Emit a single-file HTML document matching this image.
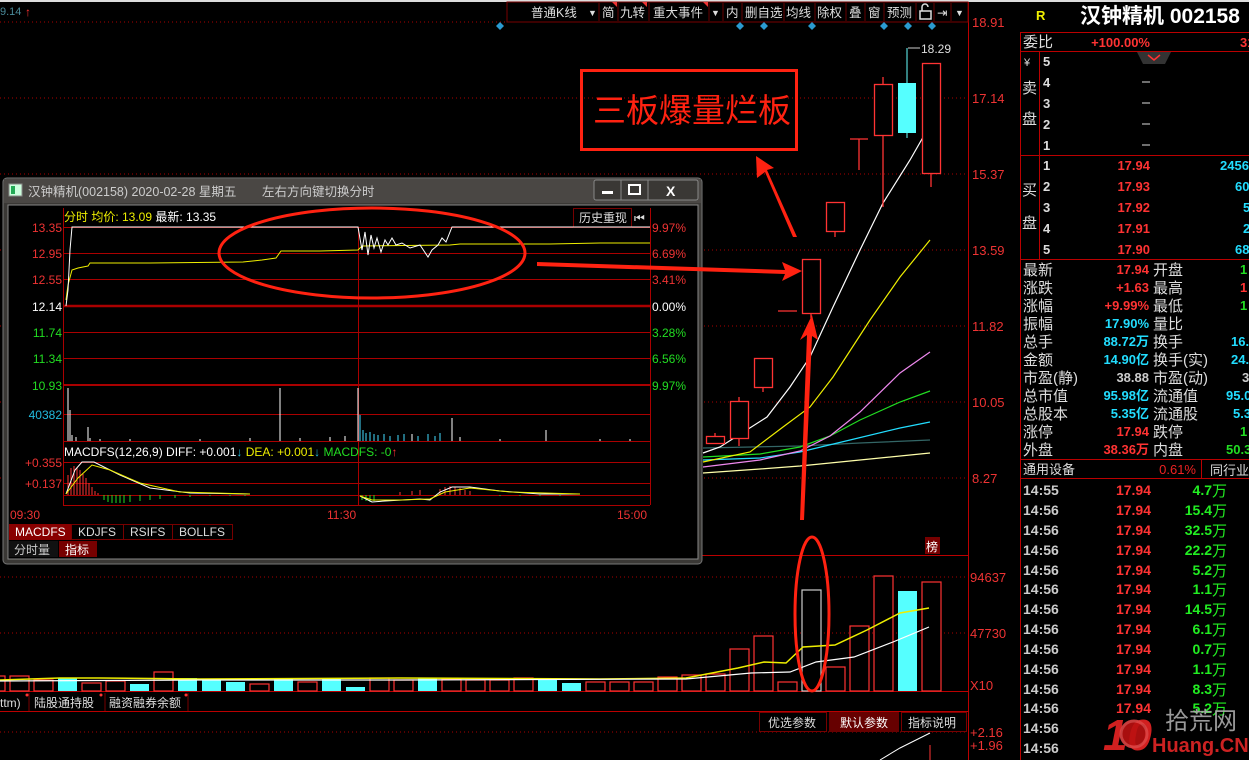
<!DOCTYPE html>
<html><head><meta charset="utf-8"><style>
html,body{margin:0;padding:0;background:#000;overflow:hidden;width:1249px;height:760px}
svg{display:block;font-family:"Liberation Sans","Noto Sans CJK SC",sans-serif}
</style></head><body>
<svg width="1249" height="760" viewBox="0 0 1249 760" xmlns="http://www.w3.org/2000/svg">
<rect width="1249" height="760" fill="#000"/>
<rect x="0" y="0" width="1249" height="2" fill="#ddd"/>
<g stroke="#a00" stroke-dasharray="1,3" stroke-width="1">
<line x1="0" y1="22" x2="968" y2="22"/><line x1="0" y1="98" x2="968" y2="98"/><line x1="0" y1="174" x2="968" y2="174"/>
<line x1="0" y1="250" x2="968" y2="250"/><line x1="0" y1="326" x2="968" y2="326"/><line x1="0" y1="402" x2="968" y2="402"/>
<line x1="0" y1="478" x2="968" y2="478"/><line x1="0" y1="577" x2="968" y2="577"/><line x1="0" y1="633" x2="968" y2="633"/>
<line x1="0" y1="732" x2="968" y2="732"/>
</g>
<line x1="968.5" y1="2" x2="968.5" y2="760" stroke="#b00"/>
<line x1="700" y1="555.5" x2="968" y2="555.5" stroke="#b00"/>
<line x1="0" y1="691.5" x2="968" y2="691.5" stroke="#b00"/>
<line x1="0" y1="711.5" x2="968" y2="711.5" stroke="#b00"/>
<g fill="#e33" font-size="13">
<text x="972" y="27">18.91</text><text x="972" y="103">17.14</text><text x="972" y="179">15.37</text>
<text x="972" y="255">13.59</text><text x="972" y="331">11.82</text><text x="972" y="407">10.05</text><text x="972" y="483">8.27</text>
<text x="970" y="582">94637</text><text x="970" y="638">47730</text><text x="970" y="690">X10</text>
<text x="970" y="737">+2.16</text><text x="970" y="750">+1.96</text>
</g>
<text x="0" y="15" fill="#4a8a99" font-size="11">9.14</text>
<text x="25" y="16" fill="#f33" font-size="12" font-weight="bold">↑</text>
<rect x="507" y="2" width="461" height="20" fill="#000" stroke="#700"/>
<g fill="#ddd" font-size="12.5">
<text x="531" y="17">普通K线</text><text x="588" y="16" font-size="9">▼</text>
<text x="602" y="17">简</text><text x="620" y="17">九转</text><text x="653" y="17">重大事件</text><text x="711" y="16" font-size="9">▼</text>
<text x="726" y="17">内</text><text x="745" y="17">删自选</text><text x="786" y="17">均线</text><text x="817" y="17">除权</text>
<text x="849" y="17">叠</text><text x="868" y="17">窗</text><text x="887" y="17">预测</text><text x="937" y="17">⇥</text><text x="955" y="16" font-size="9">▼</text>
</g>
<rect x="920" y="11" width="11" height="8" fill="none" stroke="#ddd" stroke-width="1.5"/><path d="M922 11V7a3 3 0 0 1 6 0" fill="none" stroke="#ddd" stroke-width="1.5"/>
<g stroke="#600"><line x1="599" y1="3" x2="599" y2="21"/><line x1="618" y1="3" x2="618" y2="21"/><line x1="649" y1="3" x2="649" y2="21"/><line x1="709" y1="3" x2="709" y2="21"/><line x1="723" y1="3" x2="723" y2="21"/><line x1="742" y1="3" x2="742" y2="21"/><line x1="784" y1="3" x2="784" y2="21"/><line x1="815" y1="3" x2="815" y2="21"/><line x1="846" y1="3" x2="846" y2="21"/><line x1="865" y1="3" x2="865" y2="21"/><line x1="884" y1="3" x2="884" y2="21"/><line x1="916" y1="3" x2="916" y2="21"/><line x1="934" y1="3" x2="934" y2="21"/><line x1="951" y1="3" x2="951" y2="21"/></g>
<g fill="#e33"><path d="M612 2h5v5z"/><path d="M642 2h5v5z"/><path d="M703 2h5v5z"/></g>
<g fill="#2a9ad0">
<path d="M500 22l4 4-4 4-4-4z"/><path d="M740 22l4 4-4 4-4-4z"/><path d="M764 22l4 4-4 4-4-4z"/><path d="M812 22l4 4-4 4-4-4z"/><path d="M884 22l4 4-4 4-4-4z"/><path d="M908 22l4 4-4 4-4-4z"/><path d="M932 22l4 4-4 4-4-4z"/>
</g>
<g fill="none" stroke-width="1.2">
<polyline stroke="#ffa" points="703,473 760,469 800,466 860,460 930,453"/>
<polyline stroke="#366" points="703,448 800,446 860,443 930,440"/>
<polyline stroke="#2df" points="703,460 760,458 800,452 850,440 900,428 930,422"/>
<polyline stroke="#2d2" points="703,457 760,454 800,447 830,436 860,420 900,402 930,391"/>
<polyline stroke="#e8e" points="703,467 760,460 800,451 830,436 860,412 900,373 930,352"/>
<polyline stroke="#ee0" points="703,462 750,452 783,427 810,407 833,377 870,320 900,277 930,240"/>
<polyline stroke="#fff" points="703,453 720,447 767,417 790,387 810,357 833,307 860,250 883,203 910,160 930,125"/>
</g>
<g fill="none" stroke="#f33" stroke-width="1.3">
<rect x="706.5" y="436.5" width="18" height="7"/><line x1="715" y1="433" x2="715" y2="436"/>
<line x1="739" y1="397" x2="739" y2="446"/><rect x="730.5" y="401.5" width="18" height="37" fill="#000"/>
<line x1="763" y1="387" x2="763" y2="392"/><rect x="754.5" y="358.5" width="18" height="29" fill="#000"/>
<line x1="778" y1="311" x2="797" y2="311"/>
<line x1="811" y1="313" x2="811" y2="318"/><rect x="802.5" y="259.5" width="18" height="54" fill="#000"/>
<line x1="835" y1="231" x2="835" y2="237"/><rect x="826.5" y="202.5" width="18" height="29" fill="#000"/>
<line x1="850" y1="139" x2="868" y2="139"/><line x1="859" y1="139" x2="859" y2="170"/>
<line x1="883" y1="77" x2="883" y2="207"/><rect x="874.5" y="84.5" width="18" height="51" fill="#000"/>
<line x1="931" y1="173" x2="931" y2="187"/><rect x="922.5" y="63.5" width="18" height="110" fill="#000"/>
</g>
<line x1="907" y1="48" x2="907" y2="138" stroke="#6ff"/>
<rect x="898" y="83" width="18" height="50" fill="#5ff"/>
<line x1="908" y1="48" x2="920" y2="48" stroke="#ccc"/>
<text x="921" y="53" fill="#ddd" font-size="12">18.29</text>
<g stroke="#f33" stroke-width="1.2" fill="#000">
<rect x="-14" y="676" width="19" height="15"/>
<rect x="10" y="676" width="19" height="15"/><rect x="34" y="680" width="19" height="11"/><rect x="82" y="683" width="19" height="8"/><rect x="106" y="681" width="19" height="10"/><rect x="154" y="672" width="19" height="19"/><rect x="250" y="684" width="19" height="7"/><rect x="298" y="682" width="19" height="9"/><rect x="370" y="678" width="19" height="13"/><rect x="394" y="680" width="19" height="11"/><rect x="442" y="679" width="19" height="12"/><rect x="466" y="680" width="19" height="11"/><rect x="490" y="680" width="19" height="11"/><rect x="514" y="678" width="19" height="13"/><rect x="586" y="682" width="19" height="9"/><rect x="610" y="682" width="19" height="9"/><rect x="634" y="682" width="19" height="9"/><rect x="658" y="677" width="19" height="14"/><rect x="682" y="675" width="19" height="16"/><rect x="706" y="674" width="19" height="17"/><rect x="730" y="649" width="19" height="42"/><rect x="754" y="636" width="19" height="55"/><rect x="778" y="682" width="19" height="9"/><rect x="826" y="667" width="19" height="24"/><rect x="850" y="626" width="19" height="65"/><rect x="874" y="576" width="19" height="115"/><rect x="922" y="582" width="19" height="109"/>
<rect x="802" y="590" width="19" height="101" stroke="#ccc"/>
</g>
<g fill="#5ff">
<rect x="58" y="678" width="19" height="13"/><rect x="130" y="684" width="19" height="7"/><rect x="178" y="678" width="19" height="13"/><rect x="202" y="680" width="19" height="11"/><rect x="226" y="682" width="19" height="9"/><rect x="274" y="679" width="19" height="12"/><rect x="322" y="679" width="19" height="12"/><rect x="346" y="687" width="19" height="4"/><rect x="418" y="678" width="19" height="13"/><rect x="538" y="680" width="19" height="11"/><rect x="562" y="683" width="19" height="8"/><rect x="898" y="591" width="19" height="100"/>
</g>
<polyline fill="none" stroke="#ee0" stroke-width="1.5" points="0,680 60,678 100,678 200,679 400,678 600,679 686,678 738,668 764,662 786,663 803,647 835,645 867,630 900,613 929,608"/>
<polyline fill="none" stroke="#fff" stroke-width="1.2" points="0,681 200,680 400,680 686,679 751,673 790,672 816,662 854,657 893,642 929,627"/>
<rect x="925" y="537" width="15" height="17" fill="#700"/><text x="926" y="551" fill="#fff" font-size="12">榜</text>
<g font-size="12" fill="#ddd"><text x="0" y="707">ttm)</text><text x="34" y="707">陆股通持股</text><text x="109" y="707">融资融券余额</text></g>
<g stroke="#700"><line x1="29" y1="693" x2="29" y2="711"/><line x1="105" y1="693" x2="105" y2="711"/><line x1="188" y1="693" x2="188" y2="711"/></g>
<g fill="#f33"><circle cx="27" cy="695" r="1.5"/><circle cx="101" cy="695" r="1.5"/><circle cx="186" cy="695" r="1.5"/></g>
<rect x="759.5" y="712.5" width="67" height="19" fill="#000" stroke="#700"/><text x="768" y="727" fill="#ddd" font-size="12">优选参数</text>
<rect x="829" y="712" width="70" height="20" fill="#600"/><text x="840" y="727" fill="#fff" font-size="12">默认参数</text>
<rect x="901.5" y="712.5" width="65" height="19" fill="#000" stroke="#700"/><text x="908" y="727" fill="#ddd" font-size="12">指标说明</text>
<polyline fill="none" stroke="#fff" points="880,760 900,748 930,733"/>
<line x1="930" y1="745" x2="930" y2="760" stroke="#f33"/>

<rect x="3" y="178" width="699" height="386" rx="4" fill="#3a3835" stroke="#777"/>
<rect x="4" y="179" width="697" height="24" fill="#4a4744"/>
<rect x="9" y="184" width="13" height="12" fill="#cfd" stroke="#888"/><rect x="11" y="186" width="4" height="8" fill="#2a5"/>
<text x="28" y="196" fill="#ccc" font-size="12.5">汉钟精机(002158) 2020-02-28 星期五</text>
<text x="262" y="196" fill="#ccc" font-size="12.5">左右方向键切换分时</text>
<rect x="594" y="180" width="104" height="20" fill="#3a3835" stroke="#888" rx="2"/>
<line x1="621" y1="180" x2="621" y2="200" stroke="#888"/><line x1="648" y1="180" x2="648" y2="200" stroke="#888"/>
<rect x="602" y="191" width="11" height="3" fill="#fff"/>
<rect x="629" y="185" width="11" height="9" fill="none" stroke="#fff" stroke-width="2"/>
<text x="666" y="196" fill="#fff" font-size="14" font-weight="bold">X</text>
<rect x="8" y="205" width="690" height="354" fill="#000" stroke="#888"/>
<g stroke="#a00">
<line x1="63" y1="227.5" x2="650" y2="227.5"/><line x1="63" y1="253.5" x2="650" y2="253.5"/><line x1="63" y1="279.5" x2="650" y2="279.5"/>
<line x1="63" y1="306" x2="650" y2="306" stroke-width="2.5"/><line x1="63" y1="332.5" x2="650" y2="332.5"/><line x1="63" y1="358.5" x2="650" y2="358.5"/>
<line x1="63" y1="385" x2="650" y2="385" stroke-width="2"/><line x1="63" y1="414.5" x2="650" y2="414.5"/><line x1="63" y1="441.5" x2="650" y2="441.5"/>
<line x1="63" y1="462.5" x2="650" y2="462.5"/><line x1="63" y1="483.5" x2="650" y2="483.5"/><line x1="63" y1="495.5" x2="650" y2="495.5"/><line x1="63" y1="505.5" x2="650" y2="505.5"/>
<line x1="63.5" y1="208" x2="63.5" y2="505"/><line x1="358.5" y1="227" x2="358.5" y2="505"/><line x1="650.5" y1="208" x2="650.5" y2="505"/>
</g>
<g font-size="12" text-anchor="end">
<text x="62" y="232" fill="#e33">13.35</text><text x="62" y="258" fill="#e33">12.95</text><text x="62" y="284" fill="#e33">12.55</text>
<text x="62" y="311" fill="#fff">12.14</text><text x="62" y="337" fill="#2d2">11.74</text><text x="62" y="363" fill="#2d2">11.34</text><text x="62" y="390" fill="#2d2">10.93</text>
<text x="62" y="419" fill="#2bd">40382</text><text x="62" y="467" fill="#e33">+0.355</text><text x="62" y="488" fill="#e33">+0.137</text>
</g>
<g font-size="12">
<text x="652" y="232" fill="#e33">9.97%</text><text x="652" y="258" fill="#e33">6.69%</text><text x="652" y="284" fill="#e33">3.41%</text>
<text x="652" y="311" fill="#fff">0.00%</text><text x="652" y="337" fill="#2d2">3.28%</text><text x="652" y="363" fill="#2d2">6.56%</text><text x="652" y="390" fill="#2d2">9.97%</text>
<text x="10" y="519" fill="#e33">09:30</text><text x="327" y="519" fill="#e33">11:30</text><text x="617" y="519" fill="#e33">15:00</text>
</g>
<text x="64" y="221" font-size="12"><tspan fill="#ee0">分时 均价: 13.09 </tspan><tspan fill="#fff">最新: 13.35</tspan></text>
<rect x="573.5" y="208.5" width="58" height="19" fill="#000" stroke="#700"/><text x="579" y="222" fill="#ddd" font-size="12">历史重现</text>
<text x="634" y="222" fill="#ddd" font-size="12">⏮</text>
<polyline fill="none" stroke="#ee0" points="66,300 68,285 72,270 78,268 88,266 90,263 150,263 243,262 262,260 276,258 281,251 320,251 358,250 362,246 450,245 460,244 550,244 600,243 650,243"/>
<polyline fill="none" stroke="#fff" points="66,306 68,290 70,250 72,227 358,227 362,250 365,232 368,255 371,235 374,248 377,238 381,252 385,240 388,245 392,238 396,245 402,243 410,248 420,245 428,257 432,250 438,245 442,238 446,242 452,227 650,227"/>
<g stroke="#fff"><line x1="68" y1="441" x2="68" y2="388"/><line x1="70" y1="441" x2="70" y2="410"/><line x1="88" y1="441" x2="88" y2="427"/><line x1="280" y1="441" x2="280" y2="388"/><line x1="358" y1="441" x2="358" y2="388"/><line x1="452" y1="441" x2="452" y2="418"/><line x1="546" y1="441" x2="546" y2="430"/><line x1="412" y1="441" x2="412" y2="434"/></g>
<path d="M72 441V435M76 441V437M90 441V438M100 441V439M130 441V439M200 441V439M250 441V438M300 441V438M330 441V437M345 441V436M460 441V437M500 441V439M600 441V439M630 441V439" stroke="#fff"/>
<path d="M360 441V415M363 441V430M366 441V433M370 441V432M374 441V434M378 441V435M384 441V434M390 441V436M398 441V435M404 441V434M418 441V436M428 441V434M435 441V436M440 441V433" stroke="#4df"/>
<text x="64" y="456" font-size="12"><tspan fill="#fff">MACDFS(12,26,9) DIFF: +0.001</tspan><tspan fill="#2bd">↓</tspan><tspan fill="#ee0">  DEA: +0.001</tspan><tspan fill="#2bd">↓</tspan><tspan fill="#2d2">  MACDFS: -0</tspan><tspan fill="#f33">↑</tspan></text>
<path d="M68 495V475M71 495V468M74 495V466M77 495V468M80 495V470M83 495V474M86 495V478M89 495V483M92 495V487M95 495V491M98 495V493" stroke="#f33"/>
<path d="M104 495V500M108 495V502M112 495V503M116 495V503M120 495V503M124 495V503M130 495V502M140 495V501M150 495V500M160 495V499M175 495V498M190 495V497M210 495V496M230 495V496M245 495V496" stroke="#2d2"/>
<path d="M400 495V492M412 495V491M420 495V490M440 495V489M445 495V487M450 495V486M455 495V487M460 495V488M465 495V490M470 495V491" stroke="#f33"/>
<path d="M362 495V500M366 495V501M370 495V502M374 495V501M500 495V496M520 495V496M540 495V496M560 495V496" stroke="#2d2"/>
<polyline fill="none" stroke="#fff" points="66,494 75,470 82,462 94,462 120,475 150,488 190,493 250,494"/>
<polyline fill="none" stroke="#ee0" points="66,494 78,478 92,465 110,470 140,483 180,492 250,494"/>
<polyline fill="none" stroke="#fff" points="360,496 372,502 385,501 420,499 430,500 440,492 452,487 470,487 500,491 540,494 580,494"/>
<polyline fill="none" stroke="#ee0" points="360,496 372,500 400,500 430,499 445,492 470,488 510,492 580,494"/>
<rect x="9" y="524" width="62" height="16" fill="#800"/><text x="15" y="536" fill="#fff" font-size="12">MACDFS</text>
<rect x="71.5" y="524.5" width="52" height="15" fill="none" stroke="#700"/><text x="78" y="536" fill="#ddd" font-size="12">KDJFS</text>
<rect x="123.5" y="524.5" width="49" height="15" fill="none" stroke="#700"/><text x="130" y="536" fill="#ddd" font-size="12">RSIFS</text>
<rect x="172.5" y="524.5" width="60" height="15" fill="none" stroke="#700"/><text x="179" y="536" fill="#ddd" font-size="12">BOLLFS</text>
<rect x="9" y="541" width="49" height="16" fill="#111"/><text x="14" y="554" fill="#ccc" font-size="12">分时量</text>
<rect x="59" y="541" width="38" height="16" fill="#700"/><text x="65" y="554" fill="#fff" font-size="12">指标</text>

<ellipse cx="372" cy="253" rx="153" ry="45" fill="none" stroke="#f21" stroke-width="3"/>
<path d="M537 262L785 270L782 262L802 271L782 281L785 274L537 266Z" fill="#f21"/>
<rect x="581.5" y="70.5" width="215" height="79" fill="none" stroke="#f21" stroke-width="3"/>
<text x="593" y="122" fill="#f21" font-size="33">三板爆量烂板</text>
<path d="M797 237L793 237L765 172L757 178L756 156L774 168L767 170Z" fill="#f21"/>
<ellipse cx="812" cy="614" rx="17" ry="77" fill="none" stroke="#f21" stroke-width="3"/>
<path d="M800 520L807 335L800 340L812 315L818 340L812 336L804 520Z" fill="#f21"/>

<line x1="1020.5" y1="32" x2="1020.5" y2="760" stroke="#b00"/>
<text x="1036" y="20" fill="#ee0" font-size="13" font-weight="bold">R</text>
<text x="1080" y="23" fill="#fff" font-size="21" font-weight="bold">汉钟精机 002158</text>
<g stroke="#b00">
<line x1="1020" y1="32.5" x2="1249" y2="32.5"/><line x1="1020" y1="51.5" x2="1249" y2="51.5"/><line x1="1020" y1="155.5" x2="1249" y2="155.5"/>
<line x1="1020" y1="259.5" x2="1249" y2="259.5"/><line x1="1020" y1="459.5" x2="1249" y2="459.5"/><line x1="1020" y1="478.5" x2="1249" y2="478.5"/>
<line x1="1039.5" y1="52" x2="1039.5" y2="259"/><line x1="1201.5" y1="460" x2="1201.5" y2="478"/>
</g>
<path d="M1137 52h34l-6 12h-22z" fill="#333"/><path d="M1148 55l6 5 6-5" fill="none" stroke="#f33" stroke-width="1.5"/>
<g font-size="15" fill="#ddd">
<text x="1023" y="47">委比</text>
<text x="1024" y="66" font-size="11">¥</text>
<text x="1022" y="93">卖</text><text x="1022" y="124">盘</text>
<text x="1022" y="195">买</text><text x="1022" y="228">盘</text>
</g>
<text x="1150" y="47" fill="#f33" font-size="13" font-weight="bold" text-anchor="end">+100.00%</text>
<text x="1240" y="47" fill="#f33" font-size="13" font-weight="bold">31</text>
<g font-size="13" font-weight="bold" fill="#ddd">
<text x="1043" y="66">5</text><text x="1043" y="87">4</text><text x="1043" y="108">3</text><text x="1043" y="129">2</text><text x="1043" y="150">1</text>
<text x="1043" y="170">1</text><text x="1043" y="191">2</text><text x="1043" y="212">3</text><text x="1043" y="233">4</text><text x="1043" y="254">5</text>
</g>
<g stroke="#ddd"><line x1="1142" y1="82" x2="1150" y2="82"/><line x1="1142" y1="103" x2="1150" y2="103"/><line x1="1142" y1="124" x2="1150" y2="124"/><line x1="1142" y1="145" x2="1150" y2="145"/></g>
<g font-size="13" font-weight="bold" fill="#f33" text-anchor="end">
<text x="1150" y="170">17.94</text><text x="1150" y="191">17.93</text><text x="1150" y="212">17.92</text><text x="1150" y="233">17.91</text><text x="1150" y="254">17.90</text>
</g>
<g font-size="13" font-weight="bold" fill="#2df">
<text x="1220" y="170">2456</text><text x="1235" y="191">60</text><text x="1243" y="212">5</text><text x="1243" y="233">2</text><text x="1235" y="254">68</text>
</g>
<g font-size="15" fill="#ddd">
<text x="1023" y="275">最新</text><text x="1023" y="293">涨跌</text><text x="1023" y="311">涨幅</text><text x="1023" y="329">振幅</text><text x="1023" y="347">总手</text><text x="1023" y="365">金额</text><text x="1023" y="383">市盈(静)</text><text x="1023" y="401">总市值</text><text x="1023" y="419">总股本</text><text x="1023" y="437">涨停</text><text x="1023" y="455">外盘</text>
<text x="1153" y="275">开盘</text><text x="1153" y="293">最高</text><text x="1153" y="311">最低</text><text x="1153" y="329">量比</text><text x="1153" y="347">换手</text><text x="1153" y="365">换手(实)</text><text x="1153" y="383">市盈(动)</text><text x="1153" y="401">流通值</text><text x="1153" y="419">流通股</text><text x="1153" y="437">跌停</text><text x="1153" y="455">内盘</text>
</g>
<g font-size="13" font-weight="bold" text-anchor="end">
<text x="1149" y="274" fill="#f33">17.94</text><text x="1149" y="292" fill="#f33">+1.63</text><text x="1149" y="310" fill="#f33">+9.99%</text><text x="1149" y="328" fill="#2df">17.90%</text>
<text x="1149" y="346" fill="#2df">88.72万</text><text x="1149" y="364" fill="#2df">14.90亿</text><text x="1149" y="382" fill="#ccc">38.88</text><text x="1149" y="400" fill="#2df">95.98亿</text>
<text x="1149" y="418" fill="#2df">5.35亿</text><text x="1149" y="436" fill="#f33">17.94</text><text x="1149" y="454" fill="#f33">38.36万</text>
</g>
<g font-size="13" font-weight="bold">
<text x="1240" y="274" fill="#2d2">1</text><text x="1240" y="292" fill="#f33">1</text><text x="1240" y="310" fill="#2d2">1</text>
<text x="1231" y="346" fill="#2df">16.</text><text x="1231" y="364" fill="#2df">24.</text><text x="1242" y="382" fill="#ccc">3</text><text x="1226" y="400" fill="#2df">95.0</text>
<text x="1233" y="418" fill="#2df">5.3</text><text x="1240" y="436" fill="#2d2">1</text><text x="1226" y="454" fill="#2d2">50.3</text>
</g>
<text x="1023" y="474" fill="#ddd" font-size="13">通用设备</text>
<text x="1196" y="474" fill="#e22" font-size="13" text-anchor="end">0.61%</text>
<text x="1210" y="475" fill="#ddd" font-size="13">同行业</text>
<g font-size="14" font-weight="bold">
<g fill="#ccc">
<text x="1023" y="495">14:55</text><text x="1023" y="515">14:56</text><text x="1023" y="535">14:56</text><text x="1023" y="555">14:56</text><text x="1023" y="575">14:56</text><text x="1023" y="594">14:56</text><text x="1023" y="614">14:56</text><text x="1023" y="634">14:56</text><text x="1023" y="654">14:56</text><text x="1023" y="674">14:56</text><text x="1023" y="694">14:56</text><text x="1023" y="713">14:56</text><text x="1023" y="733">14:56</text><text x="1023" y="753">14:56</text>
</g>
<g fill="#f33" text-anchor="end">
<text x="1151" y="495">17.94</text><text x="1151" y="515">17.94</text><text x="1151" y="535">17.94</text><text x="1151" y="555">17.94</text><text x="1151" y="575">17.94</text><text x="1151" y="594">17.94</text><text x="1151" y="614">17.94</text><text x="1151" y="634">17.94</text><text x="1151" y="654">17.94</text><text x="1151" y="674">17.94</text><text x="1151" y="694">17.94</text><text x="1151" y="713">17.94</text>
</g>
<g fill="#2e2" text-anchor="end">
<text x="1212" y="495">4.7</text><text x="1212" y="515">15.4</text><text x="1212" y="535">32.5</text><text x="1212" y="555">22.2</text><text x="1212" y="575">5.2</text><text x="1212" y="594">1.1</text><text x="1212" y="614">14.5</text><text x="1212" y="634">6.1</text><text x="1212" y="654">0.7</text><text x="1212" y="674">1.1</text><text x="1212" y="694">8.3</text><text x="1212" y="713">5.2</text>
</g>
<g fill="#2e2" font-weight="normal" font-size="15">
<text x="1212" y="496">万</text><text x="1212" y="516">万</text><text x="1212" y="536">万</text><text x="1212" y="556">万</text><text x="1212" y="576">万</text><text x="1212" y="595">万</text><text x="1212" y="615">万</text><text x="1212" y="635">万</text><text x="1212" y="655">万</text><text x="1212" y="675">万</text><text x="1212" y="695">万</text><text x="1212" y="714">万</text>
</g>
</g>
<text x="1103" y="750" fill="#d22" font-size="44" font-weight="bold" font-style="italic" opacity="0.95">10</text>
<circle cx="1134" cy="734" r="13" fill="#b11" stroke="#d44" stroke-width="3" opacity="0.9"/>
<text x="1165" y="729" fill="#aaa" font-size="24" opacity="0.9">拾荒网</text>
<text x="1152" y="752" fill="#c22" font-size="20" font-weight="bold">Huang.CN</text>
</svg>
</body></html>
